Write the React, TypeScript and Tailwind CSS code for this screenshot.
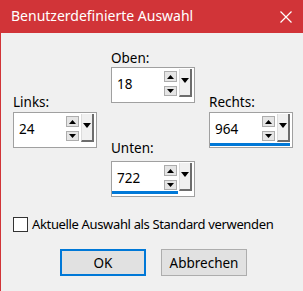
import React from "react";

function Up() {
  return (
    <svg width="7" height="4" viewBox="0 0 7 4"><path d="M0 4 L3.5 0 L7 4 Z" fill="#000" /></svg>
  );
}
function Down({ w = 7, h = 4 }: { w?: number; h?: number }) {
  return (
    <svg width={w} height={h} viewBox={`0 0 ${w} ${h}`}><path d={`M0 0 L${w} 0 L${w / 2} ${h} Z`} fill="#000" /></svg>
  );
}

function Spin({ value, bar }: { value: string; bar?: number | "full" }) {
  return (
    <div className="relative w-[84px] h-[36px] bg-white border border-[#a0a0a0] flex items-start">
      <div className="flex-1 pl-[5px] h-[34px] flex items-center text-[13.5px] leading-[16px] text-black pb-[2px]">{value}</div>
      <div className="flex flex-col gap-[4px] mt-[3px]">
        <div className="w-[13px] h-[11px] bg-[#e5e5e5] border border-[#adadad] flex items-center justify-center"><Up /></div>
        <div className="w-[13px] h-[10px] bg-[#e5e5e5] border border-[#adadad] flex items-center justify-center"><Down /></div>
      </div>
      <div className="ml-[2px] mr-[2px] mt-[1px] w-[13px] h-[28px] bg-[#f0f0f0] border-l border-l-[#dcdcdc] border-r-2 border-r-[#6d6d6d] border-b-2 border-b-[#6d6d6d] flex items-center justify-center pb-[3px]">
        <Down w={8} h={5} />
      </div>
      {bar === "full" && <div className="absolute left-0 right-[2px] bottom-[1px] h-[3px] bg-[#0078d7]" />}
      {typeof bar === "number" && <div className="absolute left-0 bottom-[2px] h-[3px] bg-[#0078d7]" style={{ width: bar }} />}
    </div>
  );
}

export default function App() {
  return (
    <div className="w-[303px] h-[291px] bg-[#f0f0f0] border-l border-[#d13438] flex flex-col font-['Noto_Sans',sans-serif] text-black overflow-hidden whitespace-nowrap">
      <div className="h-[33px] shrink-0 bg-[#d13438] flex items-center justify-between pl-[10px] pr-[11px] text-white">
        <span className="text-[14px] leading-[18px] pb-[1px]">Benutzerdefinierte Auswahl</span>
        <svg width="12" height="12" viewBox="0 0 12 12"><path d="M0.5 0.5 L11.5 11.5 M11.5 0.5 L0.5 11.5" stroke="#fff" strokeWidth="1.2" /></svg>
      </div>
      <div className="flex pl-[12px] gap-[14px]">
        <div className="pt-[61px] flex flex-col">
          <div className="text-[13.5px] leading-[16px] mb-[2px]">Links:</div>
          <Spin value="24" />
        </div>
        <div className="pt-[17px] flex flex-col">
          <div className="text-[13.5px] leading-[16px] mb-[1px]">Oben:</div>
          <Spin value="18" />
          <div className="text-[13.5px] leading-[16px] mt-[37px] mb-[5px]">Unten:</div>
          <Spin value="722" bar={66} />
        </div>
        <div className="pt-[61px] flex flex-col">
          <div className="text-[13.5px] leading-[16px] mb-[2px]">Rechts:</div>
          <Spin value="964" bar="full" />
        </div>
      </div>
      <div className="flex items-center pl-[12px] mt-[19px]">
        <div className="w-[15px] h-[15px] bg-white border border-[#333]" />
        <span className="ml-[4px] text-[13px] leading-[16px] tracking-[-0.35px]">Aktuelle Auswahl als Standard verwenden</span>
      </div>
      <div className="flex pl-[59px] gap-[15px] mt-[17px]">
        <button className="w-[86px] h-[27px] bg-[#e1e1e1] border-2 border-[#0078d7] text-[13.5px] leading-[16px]">OK</button>
        <button className="w-[86px] h-[27px] bg-[#e1e1e1] border border-[#adadad] text-[13.5px] leading-[16px]">Abbrechen</button>
      </div>
    </div>
  );
}
